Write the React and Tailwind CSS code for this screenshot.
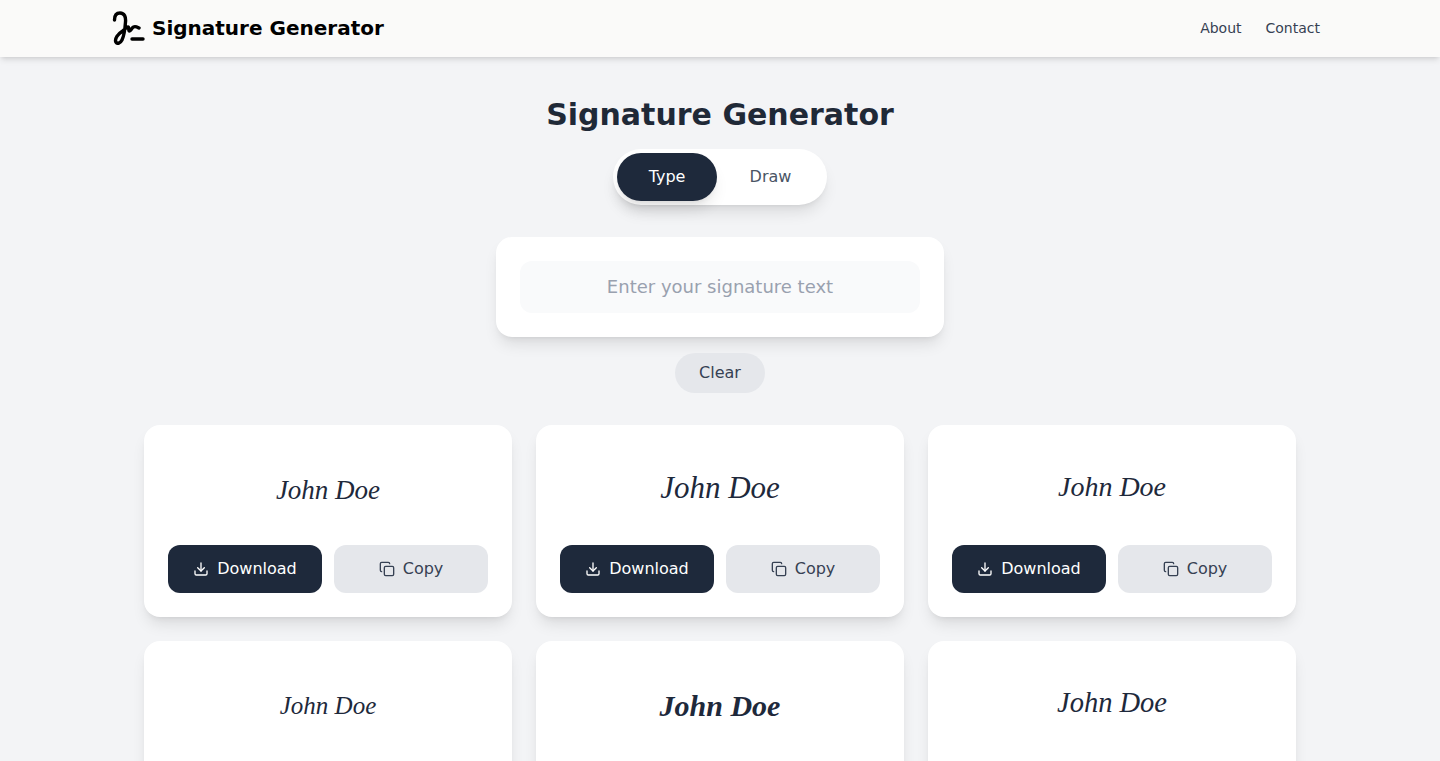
import { Download, Copy } from "lucide-react";

const sigs = [
  { cls: "text-[27px] font-normal pt-[10px]", text: "John Doe" },
  { cls: "text-[31px] font-normal pt-[7px]", text: "John Doe" },
  { cls: "text-[28px] font-normal pt-[4px]", text: "John Doe" },
  { cls: "text-[25px] font-normal pt-[10px]", text: "John Doe" },
  { cls: "text-[30px] font-bold pt-[8px]", text: "John Doe" },
  { cls: "text-[28.5px] font-medium pt-[4px]", text: "John Doe" },
];

function Logo() {
  return (
    <svg width="34" height="34" viewBox="0 0 34 34" fill="none" stroke="black" strokeWidth="3.4" strokeLinecap="round" strokeLinejoin="round" className="shrink-0">
      <path d="M2.5 9C2.5 4 5 2 8 2C12.5 2 14 6 13.5 11C13 18 12 25 10 29C8.5 32 5 33.5 3.8 31C2.5 27.5 6 23 10 20.5C12 19 14.5 16 16 16C17.5 16 16 20 17.5 20C19 20 19.5 17 21.5 16C23.5 15 25 16 27 17" />
      <path d="M20 28H31" />
    </svg>
  );
}

function Card({ cls, text }) {
  return (
    <div className="bg-white rounded-2xl shadow-lg p-6">
      <div className={`h-[72px] mb-6 flex items-center justify-center italic text-[#1e293b] font-['Liberation_Serif',serif] ${cls}`}>
        {text}
      </div>
      <div className="flex gap-3">
        <button className="flex-1 h-12 rounded-xl bg-[#1e293b] text-white flex items-center justify-center gap-2">
          <Download size={16} />
          Download
        </button>
        <button className="flex-1 h-12 rounded-xl bg-gray-200 text-gray-700 flex items-center justify-center gap-2">
          <Copy size={16} />
          Copy
        </button>
      </div>
    </div>
  );
}

export default function App() {
  return (
    <div className="min-h-screen bg-gray-100 font-['DejaVu_Sans',sans-serif]">
      <header className="h-[57px] bg-[#fafaf9] shadow-md">
        <div className="max-w-7xl mx-auto px-8 h-14 flex items-center justify-between">
          <div className="flex items-center gap-1.5">
            <Logo />
            <span className="text-xl font-bold text-black">Signature Generator</span>
          </div>
          <nav className="flex items-center text-sm text-gray-700">
            <a className="px-2 py-2 mr-2">About</a>
            <a className="px-2 py-2">Contact</a>
          </nav>
        </div>
      </header>
      <main className="max-w-6xl mx-auto pt-[33px] pb-8">
        <h1 className="text-3xl font-bold text-[#1f2937] text-center leading-[50px] mb-[9px]">Signature Generator</h1>
        <div className="flex justify-center mb-8">
          <div className="flex bg-white rounded-full shadow-lg p-1 gap-px">
            <button className="w-[100px] h-12 rounded-full bg-[#1e293b] text-white text-base shadow-lg">Type</button>
            <button className="w-[105px] h-12 rounded-full text-gray-600 text-base">Draw</button>
          </div>
        </div>
        <div className="w-md mx-auto bg-white rounded-2xl shadow-lg p-6 mb-4">
          <input
            placeholder="Enter your signature text"
            className="w-full h-[52px] pb-[2px] rounded-xl bg-gray-50 text-lg text-center outline-none placeholder:text-gray-400"
          />
        </div>
        <div className="flex justify-center mb-8">
          <button className="w-[90px] h-10 rounded-full bg-gray-200 text-gray-700 text-base">Clear</button>
        </div>
        <div className="grid grid-cols-3 gap-6">
          {sigs.map((s, i) => (
            <Card key={i} {...s} />
          ))}
        </div>
      </main>
    </div>
  );
}
